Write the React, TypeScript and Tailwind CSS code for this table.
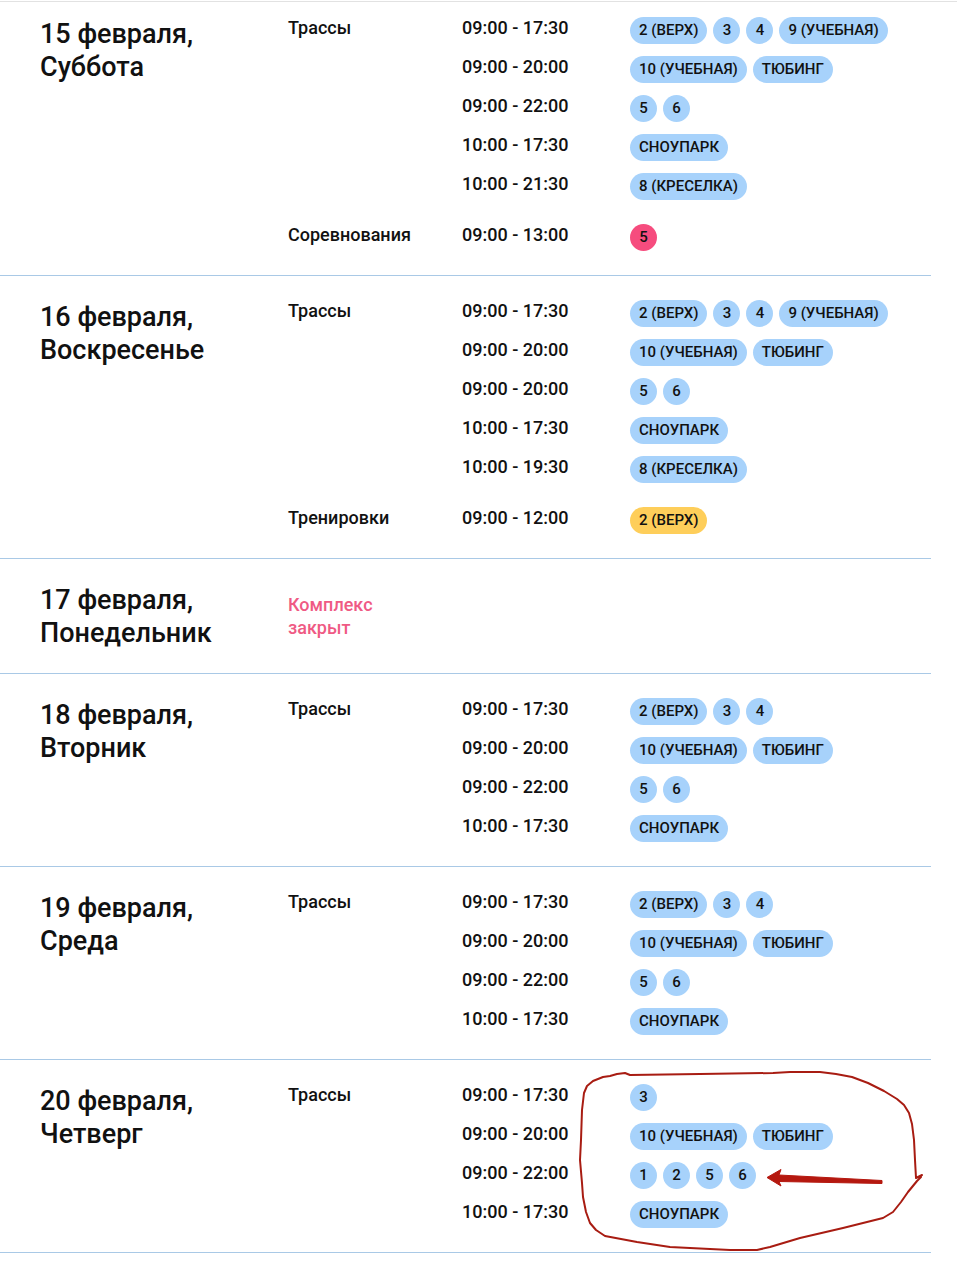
type Tone = 'blue' | 'pink' | 'yellow'

interface Group {
  name: string
  tone?: Tone
  rows: [string, string[]][]
}

interface Day {
  date: string
  weekday: string
  closed?: boolean
  groups: Group[]
}

const TONES: Record<Tone, string> = {
  blue: 'bg-[#a7d2fb]',
  pink: 'bg-[#f64c7e]',
  yellow: 'bg-[#fece5a]',
}

const DAYS: Day[] = [
  {
    date: '15 февраля,',
    weekday: 'Суббота',
    groups: [
      {
        name: 'Трассы',
        rows: [
          ['09:00 - 17:30', ['2 (ВЕРХ)', '3', '4', '9 (УЧЕБНАЯ)']],
          ['09:00 - 20:00', ['10 (УЧЕБНАЯ)', 'ТЮБИНГ']],
          ['09:00 - 22:00', ['5', '6']],
          ['10:00 - 17:30', ['СНОУПАРК']],
          ['10:00 - 21:30', ['8 (КРЕСЕЛКА)']],
        ],
      },
      { name: 'Соревнования', tone: 'pink', rows: [['09:00 - 13:00', ['5']]] },
    ],
  },
  {
    date: '16 февраля,',
    weekday: 'Воскресенье',
    groups: [
      {
        name: 'Трассы',
        rows: [
          ['09:00 - 17:30', ['2 (ВЕРХ)', '3', '4', '9 (УЧЕБНАЯ)']],
          ['09:00 - 20:00', ['10 (УЧЕБНАЯ)', 'ТЮБИНГ']],
          ['09:00 - 20:00', ['5', '6']],
          ['10:00 - 17:30', ['СНОУПАРК']],
          ['10:00 - 19:30', ['8 (КРЕСЕЛКА)']],
        ],
      },
      { name: 'Тренировки', tone: 'yellow', rows: [['09:00 - 12:00', ['2 (ВЕРХ)']]] },
    ],
  },
  { date: '17 февраля,', weekday: 'Понедельник', closed: true, groups: [] },
  {
    date: '18 февраля,',
    weekday: 'Вторник',
    groups: [
      {
        name: 'Трассы',
        rows: [
          ['09:00 - 17:30', ['2 (ВЕРХ)', '3', '4']],
          ['09:00 - 20:00', ['10 (УЧЕБНАЯ)', 'ТЮБИНГ']],
          ['09:00 - 22:00', ['5', '6']],
          ['10:00 - 17:30', ['СНОУПАРК']],
        ],
      },
    ],
  },
  {
    date: '19 февраля,',
    weekday: 'Среда',
    groups: [
      {
        name: 'Трассы',
        rows: [
          ['09:00 - 17:30', ['2 (ВЕРХ)', '3', '4']],
          ['09:00 - 20:00', ['10 (УЧЕБНАЯ)', 'ТЮБИНГ']],
          ['09:00 - 22:00', ['5', '6']],
          ['10:00 - 17:30', ['СНОУПАРК']],
        ],
      },
    ],
  },
  {
    date: '20 февраля,',
    weekday: 'Четверг',
    groups: [
      {
        name: 'Трассы',
        rows: [
          ['09:00 - 17:30', ['3']],
          ['09:00 - 20:00', ['10 (УЧЕБНАЯ)', 'ТЮБИНГ']],
          ['09:00 - 22:00', ['1', '2', '5', '6']],
          ['10:00 - 17:30', ['СНОУПАРК']],
        ],
      },
    ],
  },
]

// red pen loop around the last day's chips
const LOOP = [
  [922, 1175], [916, 1178], [915, 1160], [914, 1140], [912, 1124], [909, 1113], [904, 1105],
  [897, 1099], [884, 1091], [868, 1083], [852, 1077], [836, 1074], [820, 1072], [790, 1072],
  [773, 1073], [700, 1074], [630, 1075], [625, 1073], [617, 1074], [610, 1076], [603, 1077],
  [593, 1081], [587, 1086], [584, 1093], [582, 1110], [581, 1140], [580, 1160], [582, 1183],
  [583, 1197], [586, 1212], [590, 1223], [596, 1230], [605, 1236], [637, 1242], [670, 1247],
  [730, 1250], [757, 1250], [770, 1247], [800, 1238], [843, 1228], [867, 1222], [883, 1218],
  [893, 1212], [901, 1202], [908, 1192], [917, 1181], [921, 1177],
]

function Chip({ label, tone }: { label: string; tone: Tone }) {
  return (
    <span
      className={`flex h-[27px] min-w-[27px] items-center justify-center rounded-full px-[9px] text-[15px] font-medium leading-none text-[#111] ${TONES[tone]}`}
    >
      {label}
    </span>
  )
}

function DayBlock({ day, first }: { day: Day; first: boolean }) {
  return (
    <div className={`flex border-b border-[#a9c9e6] pb-[24px] ${first ? 'pt-[15px]' : 'pt-[24px]'}`}>
      <div className="h-[66px] w-[288px] shrink-0 pl-10 pt-px text-[27px] font-medium leading-[33px] text-[#111]">
        <div>{day.date}</div>
        <div>{day.weekday}</div>
      </div>

      {day.closed ? (
        <div className="mt-[10px] w-[120px] text-[18px] font-medium leading-[23px] text-[#ef5a84]">
          Комплекс закрыт
        </div>
      ) : (
        <div className="flex flex-col gap-[24px]">
          {day.groups.map((g, gi) => (
            <div key={gi} className="flex">
              <div className="w-[174px] shrink-0 text-[18px] font-medium leading-[21px] text-[#111]">
                {g.name}
              </div>
              <div className="flex flex-col gap-[12px]">
                {g.rows.map(([time, chips], ri) => (
                  <div key={ri} className="flex h-[27px] items-start">
                    <div className="w-[168px] shrink-0 text-[18px] font-medium leading-[21px] text-[#111]">
                      {time}
                    </div>
                    <div className="flex gap-[6px]">
                      {chips.map((c, ci) => (
                        <Chip key={ci} label={c} tone={g.tone ?? 'blue'} />
                      ))}
                    </div>
                  </div>
                ))}
              </div>
            </div>
          ))}
        </div>
      )}
    </div>
  )
}

export default function App() {
  return (
    <div
      className="relative h-[1270px] w-[957px] overflow-hidden bg-white"
      style={{ fontFamily: 'Roboto, "Noto Sans", sans-serif' }}
    >
      <div className="mt-px border-t border-[#e2e2e2]" />
      <div className="w-[931px]">
        {DAYS.map((d, i) => (
          <DayBlock key={i} day={d} first={i === 0} />
        ))}
      </div>

      <svg
        className="pointer-events-none absolute left-0 top-0"
        width="957"
        height="1270"
        viewBox="0 0 957 1270"
      >
        <polyline
          points={LOOP.map(p => p.join(',')).join(' ')}
          fill="none"
          stroke="#a81c12"
          strokeWidth="2"
          strokeLinejoin="round"
          strokeLinecap="round"
        />
        <polygon
          points="767,1177.5 781,1169.5 779,1175 882,1180.5 882,1183.5 779,1181.5 781,1186"
          fill="#b5180f"
          stroke="#b5180f"
          strokeWidth="1"
          strokeLinejoin="round"
        />
      </svg>
    </div>
  )
}
